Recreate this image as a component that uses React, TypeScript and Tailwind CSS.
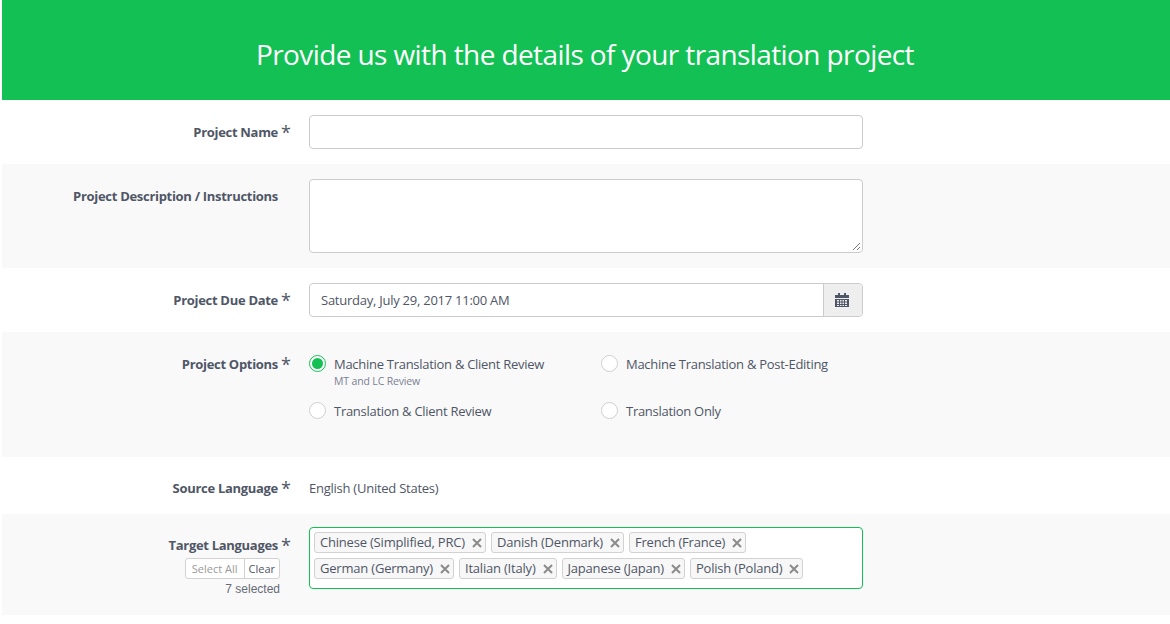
import React from "react";

const font = { fontFamily: '"Open Sans", "Noto Sans", sans-serif' };

const Label = ({ text, star = true }: { text: string; star?: boolean }) => (
  <div className="flex justify-end">
    <span className="text-[13px] leading-[20px] font-bold tracking-[-0.3px] text-[#4f5666]">{text}</span>
    <span className={`w-[31px] pl-[3px] text-[18px] leading-[20px] text-[#4f5666] ${star ? "" : "invisible"}`}>*</span>
  </div>
);

const Radio = ({ checked, label, sub }: { checked?: boolean; label: string; sub?: string }) => (
  <div className="flex items-start gap-[8px]">
    {checked ? (
      <span className="mt-[1px] flex h-[17px] w-[17px] shrink-0 items-center justify-center rounded-full border border-[#13c054] bg-white">
        <span className="h-[11px] w-[11px] rounded-full bg-[#13c054]" />
      </span>
    ) : (
      <span className="mt-[1px] h-[17px] w-[17px] shrink-0 rounded-full border border-[#cfcfcf] bg-white" />
    )}
    <div>
      <div className="text-[13px] leading-[20px] tracking-[-0.28px] text-[#4f5666]">{label}</div>
      {sub && <div className="text-[10.5px] leading-[14px] tracking-[-0.15px] text-[#7a8194]">{sub}</div>}
    </div>
  </div>
);

const Tag = ({ text }: { text: string }) => (
  <span className="flex h-[21px] items-center gap-[7px] rounded-[3px] border border-[#d2d2d2] bg-[#f7f7f7] pl-[5px] pr-[3px] text-[13px] tracking-[-0.2px] text-[#4f5666]">
    {text}
    <svg width="10" height="10" viewBox="0 0 10 10" className="mt-[1px]">
      <path d="M1 1 9 9M9 1 1 9" stroke="#8b8b8b" strokeWidth="2" />
    </svg>
  </span>
);

export default function App() {
  return (
    <div className="min-h-[624px] bg-white pl-[2px]" style={font}>
      <div className="flex h-[100px] items-center justify-center bg-[#13c054] pr-[2px] pt-[8px] text-[28px] font-medium tracking-[-0.6px] text-white">
        Provide us with the details of your translation project
      </div>

      <div className="flex h-[64px] pt-[15px]">
        <div className="w-[307px] pt-[7px]">
          <Label text="Project Name" />
        </div>
        <div className="h-[34px] w-[554px] rounded-[4px] border border-[#cccccc] bg-white" />
      </div>

      <div className="flex h-[104px] bg-[#f9f9f9] pt-[15px]">
        <div className="w-[307px] pt-[7px]">
          <Label text="Project Description / Instructions" star={false} />
        </div>
        <div className="relative h-[74px] w-[554px] rounded-[4px] border border-[#cccccc] bg-white">
          <svg width="9" height="9" viewBox="0 0 9 9" className="absolute bottom-[1px] right-[1px]">
            <path d="M1 8 8 1M5 8 8 5" stroke="#777" strokeWidth="1" />
          </svg>
        </div>
      </div>

      <div className="flex h-[64px] pt-[15px]">
        <div className="w-[307px] pt-[7px]">
          <Label text="Project Due Date" />
        </div>
        <div className="flex h-[34px] w-[554px] rounded-[4px] border border-[#cccccc] bg-white">
          <div className="flex-1 pl-[11px] text-[13px] leading-[32px] tracking-[-0.25px] text-[#4f5666]">Saturday, July 29, 2017 11:00 AM</div>
          <div className="flex w-[39px] items-center justify-center rounded-r-[3px] border-l border-[#cccccc] bg-[#eeeeee] pr-[2px]">
            <svg width="14" height="14" viewBox="0 0 14 14">
              <path d="M3 0h2v2h4V0h2v2h3v3H0V2h3z" fill="#4f5666" />
              <path fillRule="evenodd" d="M0 6h14v8H0zM2 7v1.500h2V7zm3 0v1.500h1.500V7zm2.500 0v1.500H9V7zM10 7v1.500h2V7zM2 9.500V11h2V9.500zm3 0V11h1.500V9.500zm2.500 0V11H9V9.500zm2.500 0V11h2V9.500zM2 12v1h2v-1zm3 0v1h1.500v-1zm2.500 0v1H9v-1zm2.500 0v1h2v-1z" fill="#4f5666" />
            </svg>
          </div>
        </div>
      </div>

      <div className="flex h-[125px] bg-[#f9f9f9] pt-[22px]">
        <div className="w-[307px]">
          <Label text="Project Options" />
        </div>
        <div className="grid w-[554px] grid-cols-[292px_1fr] grid-rows-[37px_auto] gap-y-[10px]">
          <Radio checked label="Machine Translation & Client Review" sub="MT and LC Review" />
          <Radio label="Machine Translation & Post-Editing" />
          <Radio label="Translation & Client Review" />
          <Radio label="Translation Only" />
        </div>
      </div>

      <div className="flex h-[57px] pt-[21px]">
        <div className="w-[307px]">
          <Label text="Source Language" />
        </div>
        <div className="text-[13px] leading-[20px] tracking-[-0.25px] text-[#4f5666]">English (United States)</div>
      </div>

      <div className="flex h-[101px] bg-[#f9f9f9] pt-[13px]">
        <div className="w-[307px]">
          <div className="pt-[8px]">
            <Label text="Target Languages" />
          </div>
          <div className="mr-[29px] mt-[3px] flex justify-end">
            <div className="flex h-[21px] rounded-[3px] border border-[#d2d2d2] bg-white text-[11px] leading-[19px]">
              <span className="px-[6px] text-[#9a9a9a]">Select All</span>
              <span className="border-l border-[#d2d2d2] px-[4px] text-[#4f5666]">Clear</span>
            </div>
          </div>
          <div className="mr-[29px] mt-[2px] text-right text-[12px] leading-[16px] text-[#666b75]" style={{ fontFamily: '"Liberation Sans", sans-serif' }}>
            7 selected
          </div>
        </div>
        <div className="flex h-[62px] w-[554px] flex-col gap-y-[5px] rounded-[4px] border border-[#13c054] bg-white pl-[4px] pt-[4px]">
          <div className="flex gap-x-[5px]">
            <Tag text="Chinese (Simplified, PRC)" />
            <Tag text="Danish (Denmark)" />
            <Tag text="French (France)" />
          </div>
          <div className="flex gap-x-[5px]">
            <Tag text="German (Germany)" />
            <Tag text="Italian (Italy)" />
            <Tag text="Japanese (Japan)" />
            <Tag text="Polish (Poland)" />
          </div>
        </div>
      </div>
    </div>
  );
}
